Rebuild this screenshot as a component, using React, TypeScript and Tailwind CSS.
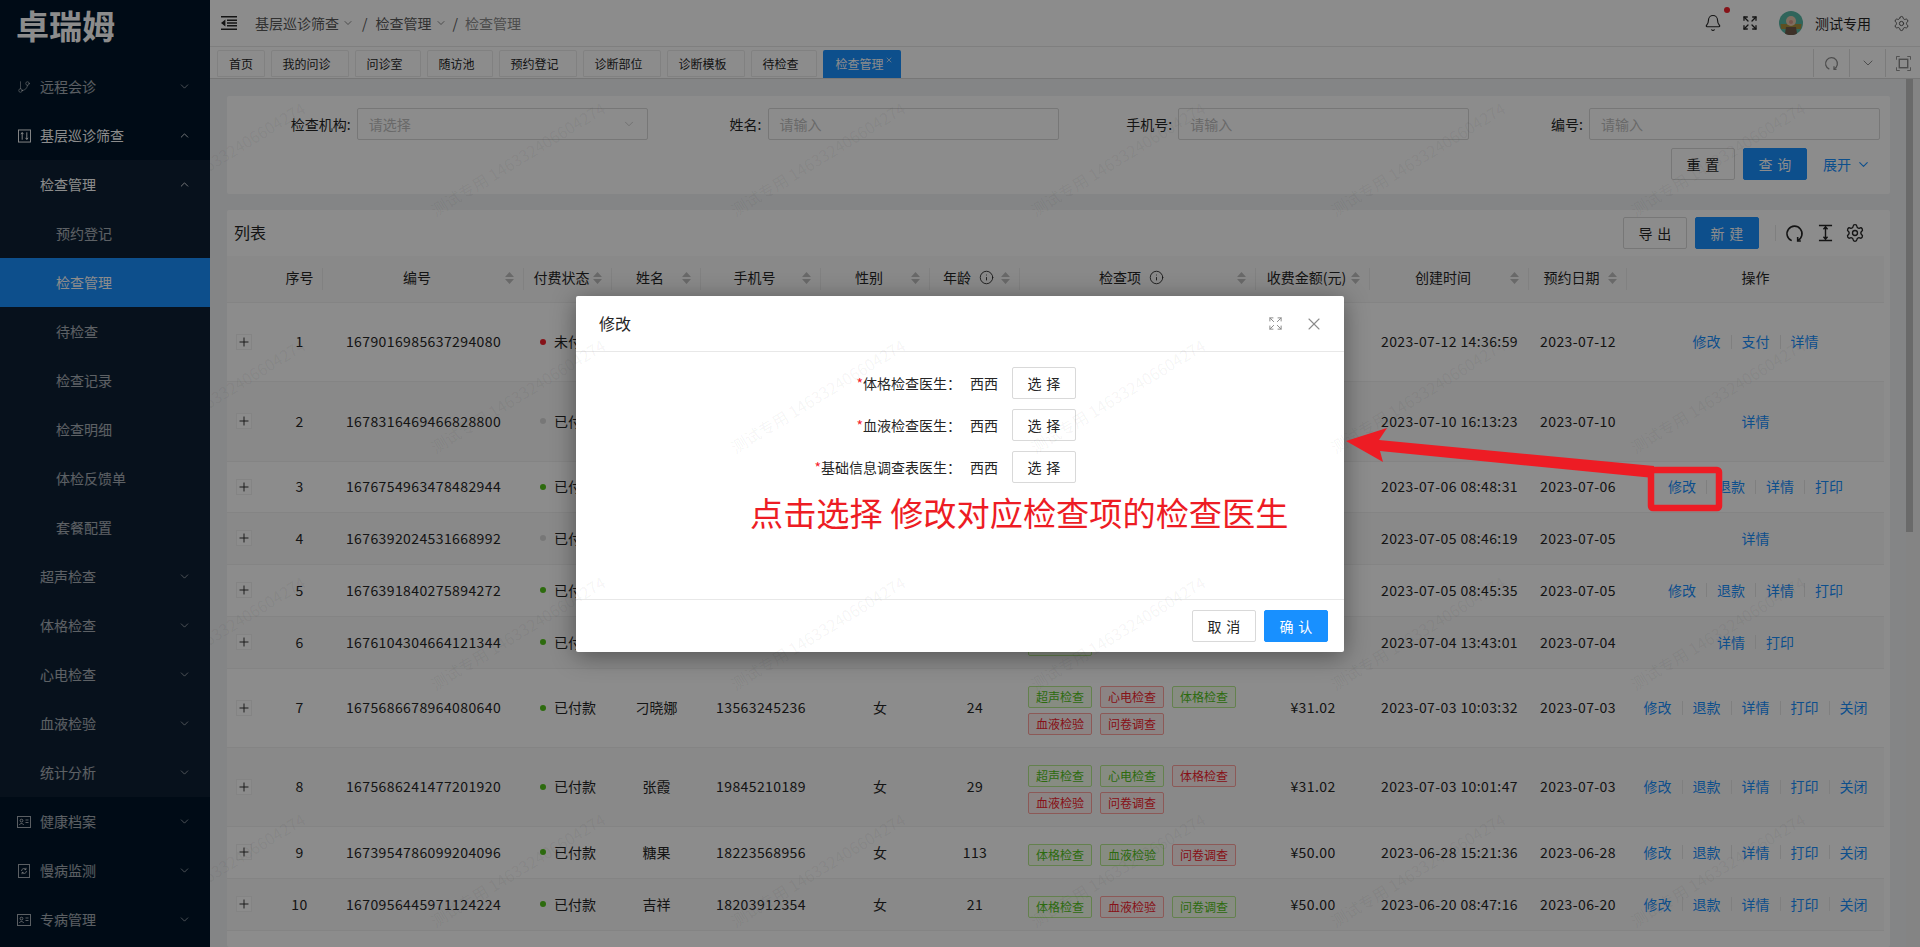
import React from 'react';
import { Bell, ChevronDown, ChevronUp, Expand, GitBranch, Info, Plus, Settings, X } from 'lucide-react';

const cols = [49, 47, 201, 88, 89, 120, 109, 90, 236, 114, 159, 98, 257];

type Tag = [string, 'g' | 'r'];

interface Row {
	h: string;
	id: string;
	dot: 'red' | 'green' | 'gray';
	status: string;
	name?: string;
	phone?: string;
	age?: string;
	tags?: Tag[];
	money?: string;
	created: string;
	date: string;
	actions: string[];
}

const rows: Row[] = [
	{ h: 'h-[79px]', id: '1679016985637294080', dot: 'red', status: '未付款', created: '2023-07-12 14:36:59', date: '2023-07-12', actions: ['修改', '支付', '详情'] },
	{ h: 'h-[80px]', id: '1678316469466828800', dot: 'gray', status: '已付款', created: '2023-07-10 16:13:23', date: '2023-07-10', actions: ['详情'] },
	{ h: 'h-[51px]', id: '1676754963478482944', dot: 'green', status: '已付款', created: '2023-07-06 08:48:31', date: '2023-07-06', actions: ['修改', '退款', '详情', '打印'] },
	{ h: 'h-[52px]', id: '1676392024531668992', dot: 'gray', status: '已付款', created: '2023-07-05 08:46:19', date: '2023-07-05', actions: ['详情'] },
	{ h: 'h-[52px]', id: '1676391840275894272', dot: 'green', status: '已付款', created: '2023-07-05 08:45:35', date: '2023-07-05', actions: ['修改', '退款', '详情', '打印'] },
	{ h: 'h-[52px]', id: '1676104304664121344', dot: 'green', status: '已付款', tags: [['体格检查', 'g']], created: '2023-07-04 13:43:01', date: '2023-07-04', actions: ['详情', '打印'] },
	{
		h: 'h-[79px]', id: '1675686678964080640', dot: 'green', status: '已付款', name: '刁晓娜', phone: '13563245236', age: '24',
		tags: [['超声检查', 'g'], ['心电检查', 'r'], ['体格检查', 'g'], ['血液检验', 'r'], ['问卷调查', 'r']],
		money: '¥31.02', created: '2023-07-03 10:03:32', date: '2023-07-03', actions: ['修改', '退款', '详情', '打印', '关闭'],
	},
	{
		h: 'h-[79px]', id: '1675686241477201920', dot: 'green', status: '已付款', name: '张霞', phone: '19845210189', age: '29',
		tags: [['超声检查', 'g'], ['心电检查', 'g'], ['体格检查', 'r'], ['血液检验', 'r'], ['问卷调查', 'r']],
		money: '¥31.02', created: '2023-07-03 10:01:47', date: '2023-07-03', actions: ['修改', '退款', '详情', '打印', '关闭'],
	},
	{
		h: 'h-[52px]', id: '1673954786099204096', dot: 'green', status: '已付款', name: '糖果', phone: '18223568956', age: '113',
		tags: [['体格检查', 'g'], ['血液检验', 'g'], ['问卷调查', 'r']],
		money: '¥50.00', created: '2023-06-28 15:21:36', date: '2023-06-28', actions: ['修改', '退款', '详情', '打印', '关闭'],
	},
	{
		h: 'h-[52px]', id: '1670956445971124224', dot: 'green', status: '已付款', name: '吉祥', phone: '18203912354', age: '21',
		tags: [['体格检查', 'g'], ['血液检验', 'r'], ['问卷调查', 'g']],
		money: '¥50.00', created: '2023-06-20 08:47:16', date: '2023-06-20', actions: ['修改', '退款', '详情', '打印', '关闭'],
	},
];

const tabs = ['我的问诊', '问诊室', '随访池', '预约登记', '诊断部位', '诊断模板', '待检查'];

const SortIcon = () => (
	<svg viewBox="0 0 9 12" className="mx-[2px] h-[12px] w-[9px] shrink-0 fill-[#bfbfbf]">
		<path d="M4.5 0 9 5H0zM0 7h9l-4.5 5z" />
	</svg>
);

const ReloadIcon = ({ className }: { className: string }) => (
	<svg viewBox="0 0 24 24" fill="none" stroke="currentColor" strokeWidth="2" className={className}>
		<path d="M8.5 21A9.5 9.5 0 1 1 16 20.8" />
		<path d="M16 16.5v5h4" />
	</svg>
);

const OutdentIcon = () => (
	<svg viewBox="0 0 16 14" className="h-[14px] w-[16px] fill-[#262626]">
		<path d="M0 0h16v1.4H0zM0 12.6h16V14H0zM6 3.6h10V5H6zM6 6.3h10v1.4H6zM6 9h10v1.4H6zM4.4 3.6v6.8L0 7z" />
	</svg>
);

const SlidersBox = () => (
	<svg viewBox="0 0 14 14" fill="none" stroke="currentColor" className="h-[14px] w-[13px]">
		<rect x="0.5" y="0.5" width="13" height="13" />
		<path d="M4.5 3v8M9.5 3v8M3 5l1.5-1.5L6 5M8 9l1.5 1.5L11 9" />
	</svg>
);

const CardIcon = () => (
	<svg viewBox="0 0 14 12" fill="none" stroke="currentColor" className="h-[12px] w-[14px]">
		<rect x="0.5" y="0.5" width="13" height="11" />
		<circle cx="4.5" cy="4.6" r="1.4" />
		<path d="M2.5 9c.3-2 3.700-2 4 0M8.500 4h3M8.500 6.500h3" />
	</svg>
);

const CycleIcon = () => (
	<svg viewBox="0 0 12 14" fill="none" stroke="currentColor" className="h-[14px] w-[12px]">
		<rect x="0.5" y="0.5" width="11" height="13" />
		<path d="M3.500 7a2.500 2.500 0 0 1 4.500-1.500M8.500 7A2.500 2.500 0 0 1 4 8.500M8 3.800v1.800H6.300M4 10.200V8.400h1.700" />
	</svg>
);

const Avatar = () => (
	<svg viewBox="0 0 24 24" className="h-[24px] w-[24px]">
		<circle cx="12" cy="12" r="12" fill="#58b8a6" />
		<path d="M1.500 13h21l-.6 5H2.100z" fill="#a9923f" />
		<circle cx="12" cy="10" r="5" fill="#e8c9b0" />
		<path d="M7 16h10l1 6.500a12 12 0 0 1-12 0z" fill="#6f5a4a" />
		<circle cx="12" cy="11" r="2" fill="#d99a8a" />
	</svg>
);

const MenuItem = ({
	label,
	icon,
	level = 0,
	arrow,
	active,
	bright,
}: {
	label: string;
	icon?: React.ReactNode;
	level?: number;
	arrow?: 'up' | 'down';
	active?: boolean;
	bright?: boolean;
}) => (
	<div
		className={`relative flex h-[49px] items-center text-[14px] ${level === 2 ? 'pl-[56px]' : 'pl-[40px]'} ${
			active ? 'bg-[#1890ff] text-white' : bright ? 'text-white' : 'text-white/65'
		}`}
	>
		{icon && <span className="absolute left-[17px] flex w-[14px] justify-center">{icon}</span>}
		{label}
		{arrow === 'up' && <ChevronUp size={13} strokeWidth={1.5} className="absolute left-[178px]" />}
		{arrow === 'down' && <ChevronDown size={13} strokeWidth={1.5} className="absolute left-[178px]" />}
	</div>
);

const Sidebar = () => (
	<aside className="flex w-[210px] shrink-0 flex-col bg-[#001529]">
		<div className="flex h-[62px] items-start pl-[16px] pt-[1px] text-[33px] leading-[48px] font-bold text-white">卓瑞姆</div>
		<MenuItem label="远程会诊" arrow="down" icon={<GitBranch size={16} strokeWidth={1.2} />} />
		<MenuItem label="基层巡诊筛查" arrow="up" bright icon={<SlidersBox />} />
		<div className="flex flex-col bg-[#0d1f33]">
			<MenuItem label="检查管理" arrow="up" bright />
			<MenuItem label="预约登记" level={2} />
			<MenuItem label="检查管理" level={2} active />
			<MenuItem label="待检查" level={2} />
			<MenuItem label="检查记录" level={2} />
			<MenuItem label="检查明细" level={2} />
			<MenuItem label="体检反馈单" level={2} />
			<MenuItem label="套餐配置" level={2} />
			<MenuItem label="超声检查" arrow="down" />
			<MenuItem label="体格检查" arrow="down" />
			<MenuItem label="心电检查" arrow="down" />
			<MenuItem label="血液检验" arrow="down" />
			<MenuItem label="统计分析" arrow="down" />
		</div>
		<MenuItem label="健康档案" arrow="down" icon={<CardIcon />} />
		<MenuItem label="慢病监测" arrow="down" icon={<CycleIcon />} />
		<MenuItem label="专病管理" arrow="down" icon={<CardIcon />} />
	</aside>
);

const Header = () => (
	<header className="flex h-[47px] shrink-0 items-center border-b border-[#e8e8e8] bg-white pl-[11px] pr-[10px]">
		<OutdentIcon />
		<div className="ml-[18px] flex items-center text-[14px] text-[#595959]">
			<span>基层巡诊筛查</span>
			<ChevronDown size={12} strokeWidth={1.4} className="ml-[3px]" />
			<span className="mx-[8px]">/</span>
			<span>检查管理</span>
			<ChevronDown size={12} strokeWidth={1.4} className="ml-[3px]" />
			<span className="ml-[6px] mr-[7px]">/</span>
			<span className="text-[#8c8c8c]">检查管理</span>
		</div>
		<div className="relative ml-auto flex items-center text-[#262626]">
			<Bell size={18} strokeWidth={1.5} />
			<span className="absolute left-[20px] top-[-4px] h-[6px] w-[6px] rounded-full bg-[#f5222d]" />
			<Expand size={16} strokeWidth={1.9} className="ml-[20px]" />
			<span className="ml-[21px] flex">
				<Avatar />
			</span>
			<span className="ml-[12px] text-[14px]">测试专用</span>
			<Settings size={17} strokeWidth={1.4} className="ml-[22px] text-[#595959]" />
		</div>
	</header>
);

const TabsBar = () => (
	<div className="flex h-[32px] shrink-0 items-start border-b border-[#d9d9d9] bg-white pl-[7px]">
		<div className="mt-[3px] flex gap-[6.4px] text-[12px]">
			<div className="flex h-[27px] items-center rounded-t-[2px] border border-[#ececec] px-[11px] text-[#262626]">首页</div>
			{tabs.map((t) => (
				<div key={t} className="flex h-[27px] items-center rounded-t-[2px] border border-[#ececec] pl-[10px] pr-[17.600px] text-[#262626]">
					{t}
				</div>
			))}
			<div className="relative flex h-[28px] w-[78px] items-center rounded-t-[2px] bg-[#1890ff] pl-[12px] text-white">
				检查管理
				<X size={8} strokeWidth={2} className="absolute right-[8px] top-[6px]" />
			</div>
		</div>
		<div className="ml-auto mt-[2px] flex h-[28px] text-[#8c8c8c]">
			<div className="flex w-[36px] items-center justify-center border-l border-[#e0e0e0]">
				<ReloadIcon className="h-[15px] w-[15px]" />
			</div>
			<div className="flex w-[36px] items-center justify-center border-l border-[#e0e0e0]">
				<ChevronDown size={16} strokeWidth={1.5} />
			</div>
			<div className="flex w-[35px] items-center justify-center border-l border-[#e0e0e0]">
				<svg viewBox="0 0 16 16" fill="none" stroke="currentColor" className="h-[15px] w-[15px]">
					<path d="M.5 4V.5H4M12 .5h3.500V4M15.500 12v3.500H12M4 15.500H.5V12" />
					<rect x="3.500" y="3.500" width="9" height="9" strokeWidth="1.500" />
				</svg>
			</div>
		</div>
	</div>
);

const FormField = ({ label, value, select }: { label: string; value: string; select?: boolean }) => (
	<div className="flex items-center justify-end">
		<span className="mr-[6px] text-[14px] text-[#262626]">{label}:</span>
		<div className="flex h-[32px] w-[291px] items-center justify-between rounded-[2px] border border-[#d9d9d9] bg-white px-[11px] text-[14px] text-[#bfbfbf]">
			{value}
			{select && <ChevronDown size={14} strokeWidth={1.3} className="text-[#bfbfbf]" />}
		</div>
	</div>
);

const Btn = ({ children, primary }: { children: string; primary?: boolean }) => (
	<button
		className={`flex h-[32px] w-[64px] items-center justify-center rounded-[2px] border text-[14px] ${
			primary ? 'border-[#1890ff] bg-[#1890ff] text-white' : 'border-[#d9d9d9] bg-white text-[#262626]'
		}`}
	>
		<span className="-mr-[0.34em] tracking-[0.34em]">{children}</span>
	</button>
);

const SearchCard = () => (
	<section className="shrink-0 rounded-[2px] bg-white px-[10px] pb-[14px] pt-[12px]">
		<div className="grid grid-cols-4">
			<FormField label="检查机构" value="请选择" select />
			<FormField label="姓名" value="请输入" />
			<FormField label="手机号" value="请输入" />
			<FormField label="编号" value="请输入" />
		</div>
		<div className="mt-[8px] flex items-center justify-end gap-[8px] pr-[9px]">
			<Btn>重置</Btn>
			<Btn primary>查询</Btn>
			<span className="ml-[8px] flex items-center text-[14px] text-[#1890ff]">
				展开
				<ChevronDown size={15} strokeWidth={1.8} className="ml-[5px]" />
			</span>
		</div>
	</section>
);

const Th = ({ children, sort, info, last }: { children: string; sort?: boolean; info?: boolean; last?: boolean }) => (
	<th
		className={`relative px-[8px] pb-[2px] text-[14px] font-normal text-[#262626] ${
			last ? '' : "after:absolute after:right-0 after:top-1/2 after:h-[22px] after:w-px after:-translate-y-1/2 after:bg-[#ebebeb] after:content-['']"
		}`}
	>
		<div className="flex items-center">
			<span className="flex flex-1 items-center justify-center whitespace-nowrap">
				{children}
				{info && <Info size={15} strokeWidth={1.4} className="ml-[8px]" />}
			</span>
			{sort && <SortIcon />}
		</div>
	</th>
);

const Actions = ({ items }: { items: string[] }) => (
	<div className="flex items-center justify-center text-[14px] text-[#1890ff]">
		{items.map((a, i) => (
			<React.Fragment key={a}>
				{i > 0 && <span className="mx-[10px] h-[14px] w-px bg-[#e8e8e8]" />}
				<span>{a}</span>
			</React.Fragment>
		))}
	</div>
);

const dotColor = { red: 'bg-[#f5222d]', green: 'bg-[#52c41a]', gray: 'bg-[#d9d9d9]' };

const TableRow = ({ row, index }: { row: Row; index: number }) => (
	<tr className={`${row.h} border-b border-[#f0f0f0] even:bg-[#fafafa]`}>
		<td className="pl-[9px]">
			<span className="flex h-[16px] w-[16px] items-center justify-center border border-[#f0f0f0] bg-white text-[#262626]">
				<Plus size={14} strokeWidth={1.6} />
			</span>
		</td>
		<td className="text-center tracking-[0.4px]">{index + 1}</td>
		<td className="text-center tracking-[0.4px]">{row.id}</td>
		<td>
			<div className="flex items-center justify-center">
				<span className={`mr-[8px] h-[6px] w-[6px] rounded-full ${dotColor[row.dot]}`} />
				{row.status}
			</div>
		</td>
		<td className="text-center">{row.name}</td>
		<td className="text-center tracking-[0.4px]">{row.phone}</td>
		<td className="pl-[9px] text-center">{row.name ? '女' : ''}</td>
		<td className="text-center tracking-[0.4px]">{row.age}</td>
		<td className="pl-[8px] pt-[6px]">
			<div className="flex flex-wrap gap-x-[8px] gap-y-[5px]">
				{row.tags?.map(([t, c], i) => (
					<span
						key={i}
						className={`flex h-[22px] w-[64px] items-center justify-center rounded-[2px] border text-[12px] ${
							c === 'g' ? 'border-[#b7eb8f] bg-[#f6ffed] text-[#52c41a]' : 'border-[#ffa39e] bg-[#fff1f0] text-[#f5222d]'
						}`}
					>
						{t}
					</span>
				))}
			</div>
		</td>
		<td className="text-center tracking-[0.4px]">{row.money}</td>
		<td className="text-center tracking-[0.4px]">{row.created}</td>
		<td className="text-center tracking-[0.4px]">{row.date}</td>
		<td>
			<Actions items={row.actions} />
		</td>
	</tr>
);

const ListCard = () => (
	<section className="mt-[16px] flex-1 rounded-[2px] bg-white">
		<div className="flex h-[46px] items-center pl-[7px] pr-[25px]">
			<span className="pb-[2px] text-[16px] text-[#262626]">列表</span>
			<div className="ml-auto flex items-center gap-[8px]">
				<Btn>导出</Btn>
				<Btn primary>新建</Btn>
			</div>
			<span className="ml-[16px] h-[16px] w-px bg-[#e8e8e8]" />
			<div className="flex items-center text-[#262626]">
				<ReloadIcon className="ml-[8.500px] h-[19px] w-[19px]" />
				<svg viewBox="0 0 16 18" fill="none" stroke="currentColor" strokeWidth="1.500" className="ml-[14px] h-[18px] w-[15px]">
					<path d="M1 1h14M1 17h14M8 2.500v13M5.800 5 8 2.500 10.200 5M5.800 13 8 15.500 10.200 13" />
				</svg>
				<Settings size={20} strokeWidth={1.6} className="ml-[12.500px]" />
			</div>
		</div>
		<table className="w-[1657px] table-fixed border-collapse text-[14px] text-[#262626]">
			<colgroup>
				{cols.map((w, i) => (
					<col key={i} style={{ width: w }} />
				))}
			</colgroup>
			<thead>
				<tr className="h-[46px] border-b border-[#f0f0f0] bg-[#fafafa]">
					<th />
					<Th>序号</Th>
					<Th sort>编号</Th>
					<Th sort>付费状态</Th>
					<Th sort>姓名</Th>
					<Th sort>手机号</Th>
					<Th sort>性别</Th>
					<Th sort info>年龄</Th>
					<Th sort info>检查项</Th>
					<Th sort>收费金额(元)</Th>
					<Th sort>创建时间</Th>
					<Th sort>预约日期</Th>
					<Th last>操作</Th>
				</tr>
			</thead>
			<tbody>
				{rows.map((r, i) => (
					<TableRow key={r.id} row={r} index={i} />
				))}
			</tbody>
		</table>
	</section>
);

const doctorRows = ['体格检查医生', '血液检查医生', '基础信息调查表医生'];

const Modal = () => (
	<div className="absolute left-[576px] top-[296px] z-20 flex h-[356px] w-[768px] flex-col rounded-[2px] bg-white shadow-[0_4px_24px_rgba(0,0,0,0.4)]">
		<div className="flex h-[56px] shrink-0 items-center border-b border-[#e8e8e8] pl-[23px] pr-[20px]">
			<span className="pb-[2px] text-[16px] text-[#262626]">修改</span>
			<Expand size={15} strokeWidth={1.6} className="ml-auto text-[#8c8c8c]" />
			<X size={20} strokeWidth={1.3} className="ml-[21px] text-[#8c8c8c]" />
		</div>
		<div className="flex flex-1 flex-col gap-[10px] pt-[15px]">
			{doctorRows.map((d) => (
				<div key={d} className="flex h-[32px] items-center text-[14px] text-[#262626]">
					<span className="w-[385px] text-right">
						<span className="text-[#f5222d]">*</span>
						{d}：
					</span>
					<span className="ml-[9px] w-[42px]">西西</span>
					<button className="flex h-[32px] w-[64px] items-center justify-center rounded-[2px] border border-[#d9d9d9] bg-white text-[#262626]">
						<span className="-mr-[0.34em] tracking-[0.34em]">选择</span>
					</button>
				</div>
			))}
		</div>
		<div className="flex h-[53px] shrink-0 items-center justify-end gap-[8px] border-t border-[#e8e8e8] pr-[16px]">
			<Btn>取消</Btn>
			<Btn primary>确认</Btn>
		</div>
		<span className="absolute left-[174px] top-[193px] whitespace-nowrap text-[33.200px] leading-[46px] text-[#ed1c24]">点击选择 修改对应检查项的检查医生</span>
	</div>
);

const Annotation = () => (
	<svg viewBox="0 0 1920 947" className="pointer-events-none absolute inset-0 z-40 h-[947px] w-[1920px]">
		<path d="M1346 441 1387 428 1379 440 1654 466 1654 478 1380 451 1383 462z" fill="#ed1c24" />
		<rect x="1651" y="470" width="68" height="38" rx="2" fill="none" stroke="#ed1c24" strokeWidth="6.500" />
	</svg>
);

const Watermarks = () => {
	const marks: { x: number; y: number }[] = [];
	for (let j = 0; j < 4; j++) {
		for (let k = 0; k < 7; k++) {
			marks.push({ x: 132 - 210 + 300 * k, y: 203 - 79 + 237 * j });
		}
	}
	return (
		<div className="pointer-events-none absolute bottom-0 left-[210px] right-0 top-[79px] z-30 overflow-hidden">
			{marks.map((m, i) => (
				<span
					key={i}
					className="absolute origin-left -rotate-[31.500deg] whitespace-nowrap text-[16px] leading-none text-black/[0.05]"
					style={{ left: m.x, top: m.y }}
				>
					测试专用 146332406604274
				</span>
			))}
		</div>
	);
};

export default function App() {
	return (
		<div className="relative flex h-[947px] w-[1920px] overflow-hidden bg-[#f0f2f5] font-['Noto_Sans_CJK_SC','Liberation_Sans',sans-serif]">
			<Sidebar />
			<main className="flex min-w-0 flex-1 flex-col">
				<Header />
				<TabsBar />
				<div className="flex min-h-0 flex-1">
					<div className="flex min-w-0 flex-1 flex-col pl-[17px] pr-[16px] pt-[17px]">
						<SearchCard />
						<ListCard />
					</div>
					<div className="w-[14px] shrink-0 bg-[#f1f1f1]">
						<div className="h-[453px] w-[7px] bg-[#c1c1c1]" />
					</div>
				</div>
			</main>
			<div className="absolute inset-0 z-10 bg-black/45" />
			<Modal />
			<Watermarks />
			<Annotation />
		</div>
	);
}
